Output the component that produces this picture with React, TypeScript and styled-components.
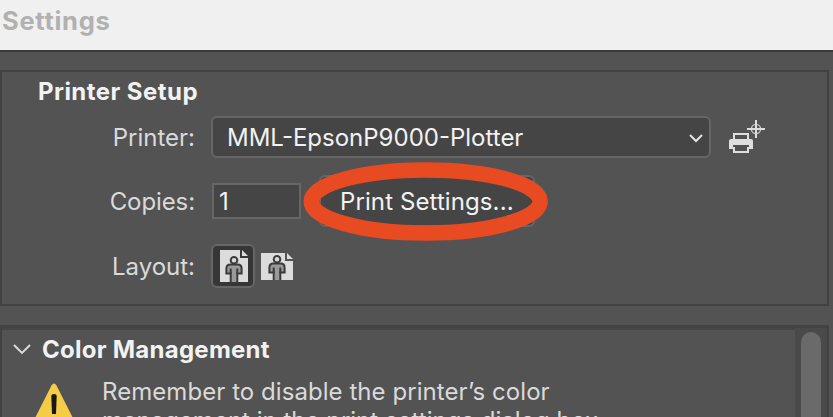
import React from 'react';
import styled, { createGlobalStyle } from 'styled-components';

const Global = createGlobalStyle`
  * { box-sizing: border-box; }
  html, body { margin: 0; height: 100%; overflow: hidden; background: #535353; }
  body { font-family: Inter, "Liberation Sans", sans-serif; font-size: 24px; }
`;

const Window = styled.main`
  width: 833px;
  height: 417px;
  overflow: hidden;
  background: #535353;
  color: #dadada;
`;

const TitleBar = styled.header`
  height: 52px;
  padding: 6px 0 0 2px;
  background: #f0f0f0;
  border-bottom: 2px solid #3b3b3b;
  color: #b1b1b1;
`;

const Label = styled.span<{ $track?: number; $bold?: boolean; $size?: number }>`
  display: block;
  white-space: nowrap;
  line-height: 30px;
  font-size: ${p => p.$size ?? 24}px;
  font-weight: ${p => (p.$bold ? 700 : 400)};
  letter-spacing: ${p => p.$track ?? 0}px;
`;

const Group = styled.section`
  width: 829px;
  height: 236px;
  margin-top: 18px;
  padding: 4px 0 0;
  border: 2px solid #424242;
`;

const Heading = styled.div`
  padding: 1px 0 0 36px;
  height: 40px;
  color: #f2f2f2;
`;

const Row = styled.div<{ $height: number }>`
  display: flex;
  align-items: center;
  height: ${p => p.$height}px;
`;

const Caption = styled.div`
  display: flex;
  justify-content: flex-end;
  width: 193px;
  margin-right: 16px;
  padding-top: 2px;
`;

const Select = styled.div`
  display: flex;
  align-items: center;
  justify-content: space-between;
  width: 500px;
  height: 42px;
  padding: 0 5px 0 14px;
  border: 2px solid #666;
  border-radius: 6px;
  background: #454545;
  color: #f2f2f2;
`;

const SelectValue = styled.div`
  padding-top: 2px;
`;

const PrinterIcon = styled.svg`
  margin-left: 18px;
`;

const Field = styled.div`
  width: 89px;
  height: 36px;
  margin-left: 1px;
  padding: 2px 0 0 5px;
  border: 2px solid #666;
  background: #454545;
  color: #f2f2f2;
`;

const Button = styled.div`
  position: relative;
  display: flex;
  align-items: center;
  width: 216px;
  height: 52px;
  margin-left: 18px;
  padding: 2px 0 0 19px;
  border: 2px solid #666;
  border-radius: 6px;
  background: #454545;
  color: #f2f2f2;
`;

const Highlight = styled.svg`
  position: absolute;
  left: -19px;
  top: -16px;
`;

const ButtonLabel = styled.div`
  position: relative;
  z-index: 1;
`;

const LayoutButton = styled.div<{ $active?: boolean }>`
  display: flex;
  align-items: center;
  justify-content: center;
  width: 44px;
  height: 44px;
  padding: ${p => (p.$active ? '0 0 0 2px' : '1px 0 0')};
  border: 2px solid ${p => (p.$active ? '#666' : 'transparent')};
  border-radius: 6px;
  background: ${p => (p.$active ? '#363636' : 'transparent')};
`;

const Panel = styled.section`
  display: flex;
  width: 829px;
  height: 92px;
  margin-top: 19px;
  border: 2px solid #424242;
  border-top-width: 3px;
  border-bottom: 0;
`;

const PanelBody = styled.div`
  flex: 1;
  border-top: 2px solid #464646;
`;

const PanelHeading = styled.div`
  display: flex;
  align-items: center;
  gap: 10px;
  height: 38px;
  padding: 2px 0 0 10px;
  color: #f2f2f2;
`;

const Chevron = styled.svg`
  margin-top: -2px;
`;

const Notice = styled.div`
  display: flex;
  padding-left: 31px;
`;

const Message = styled.div`
  margin: 9px 0 0 27px;
`;

const MessageLine = styled(Label)`
  line-height: 29px;
`;

const Track = styled.div`
  width: 32px;
  padding: 4px 6px 0;
  background: #4a4a4a;
`;

const Thumb = styled.div`
  width: 20px;
  height: 100px;
  border-radius: 10px;
  background: #6a6a6a;
`;

const Person = ({ x, y }: { x: number; y: number }) => (
  <g transform={`translate(${x} ${y})`} stroke="#3b3b3b" strokeWidth="2">
    <path d="M4.700 27V17.500H.400V12.500Q.400 8.500 4.400 8.500H11.600Q15.600 8.500 15.600 12.500V17.500H11.300V27" fill="#999" />
    <path d="M4.700 12.500V18M11.300 12.500V18" fill="none" />
    <circle cx="8" cy="4.200" r="3.300" fill="#d8d8d8" />
  </g>
);

const PortraitIcon = () => (
  <svg width="28" height="32" viewBox="0 0 28 32">
    <path d="M0 0H20V8H28V32H0Z" fill="#dcdcdc" />
    <path d="M22 0L28 6H22Z" fill="#dcdcdc" />
    <Person x={6} y={6} />
  </svg>
);

const LandscapeIcon = () => (
  <svg width="32" height="27" viewBox="0 0 32 27">
    <path d="M0 0H24V8H32V27H0Z" fill="#dcdcdc" />
    <path d="M26 0L32 6H26Z" fill="#dcdcdc" />
    <Person x={8} y={2} />
  </svg>
);

export default function App() {
  return (
    <>
      <Global />
      <Window>
        <TitleBar>
          <Label $bold $size={25.5} $track={0.7}>Settings</Label>
        </TitleBar>
        <Group>
          <Heading>
            <Label $bold $track={0.45}>Printer Setup</Label>
          </Heading>
          <Row $height={42}>
            <Caption><Label>Printer:</Label></Caption>
            <Select>
              <SelectValue><Label>MML-EpsonP9000-Plotter</Label></SelectValue>
              <svg width="16" height="12" viewBox="0 0 16 12">
                <path d="M2 4L8 10L14 4" fill="none" stroke="#e4e4e4" strokeWidth="2" />
              </svg>
            </Select>
            <PrinterIcon width="36" height="34" viewBox="0 0 36 34">
              <path d="M4 13H20V19H22Q24 19 24 21V29H20V33H4V29H0V21Q0 19 2 19H4Z" fill="#dedede" />
              <path d="M6 15H18V19H6ZM4 25H20V27H4ZM6 27H18V31H6Z" fill="#505050" />
              <circle cx="27" cy="9" r="4.600" fill="none" stroke="#c8c8c8" strokeWidth="1.400" />
              <path d="M27 0V18M18 9H36" stroke="#dedede" strokeWidth="2" />
            </PrinterIcon>
          </Row>
          <Row $height={86}>
            <Caption><Label $track={-0.1}>Copies:</Label></Caption>
            <Field><Label>1</Label></Field>
            <Button>
              <Highlight width="250" height="82" viewBox="0 0 250 82">
                <ellipse cx="123.700" cy="40.400" rx="114.400" ry="31.500" fill="none" stroke="#e84a22" strokeWidth="15.500" />
              </Highlight>
              <ButtonLabel><Label $track={0.1}>Print Settings...</Label></ButtonLabel>
            </Button>
          </Row>
          <Row $height={44}>
            <Caption><Label>Layout:</Label></Caption>
            <LayoutButton $active><PortraitIcon /></LayoutButton>
            <LayoutButton><LandscapeIcon /></LayoutButton>
          </Row>
        </Group>
        <Panel>
          <PanelBody>
            <PanelHeading>
              <Chevron width="20" height="14" viewBox="0 0 20 14">
                <path d="M2 3L10 11L18 3" fill="none" stroke="#dedede" strokeWidth="1.800" />
              </Chevron>
              <Label $bold $track={0.26}>Color Management</Label>
            </PanelHeading>
            <Notice>
              <svg width="42" height="60" viewBox="0 0 42 60">
                <path d="M18.500 17.500Q21 13.500 23.500 17.500L45 60H-3Z" fill="#f5cc45" />
                <path d="M18.300 28Q18.300 26 21 26T23.700 28L23 46H19Z" fill="#171717" />
              </svg>
              <Message>
                <MessageLine $track={0.06}>Remember to disable the printer’s color</MessageLine>
                <MessageLine>management in the print settings dialog box.</MessageLine>
              </Message>
            </Notice>
          </PanelBody>
          <Track><Thumb /></Track>
        </Panel>
      </Window>
    </>
  );
}
